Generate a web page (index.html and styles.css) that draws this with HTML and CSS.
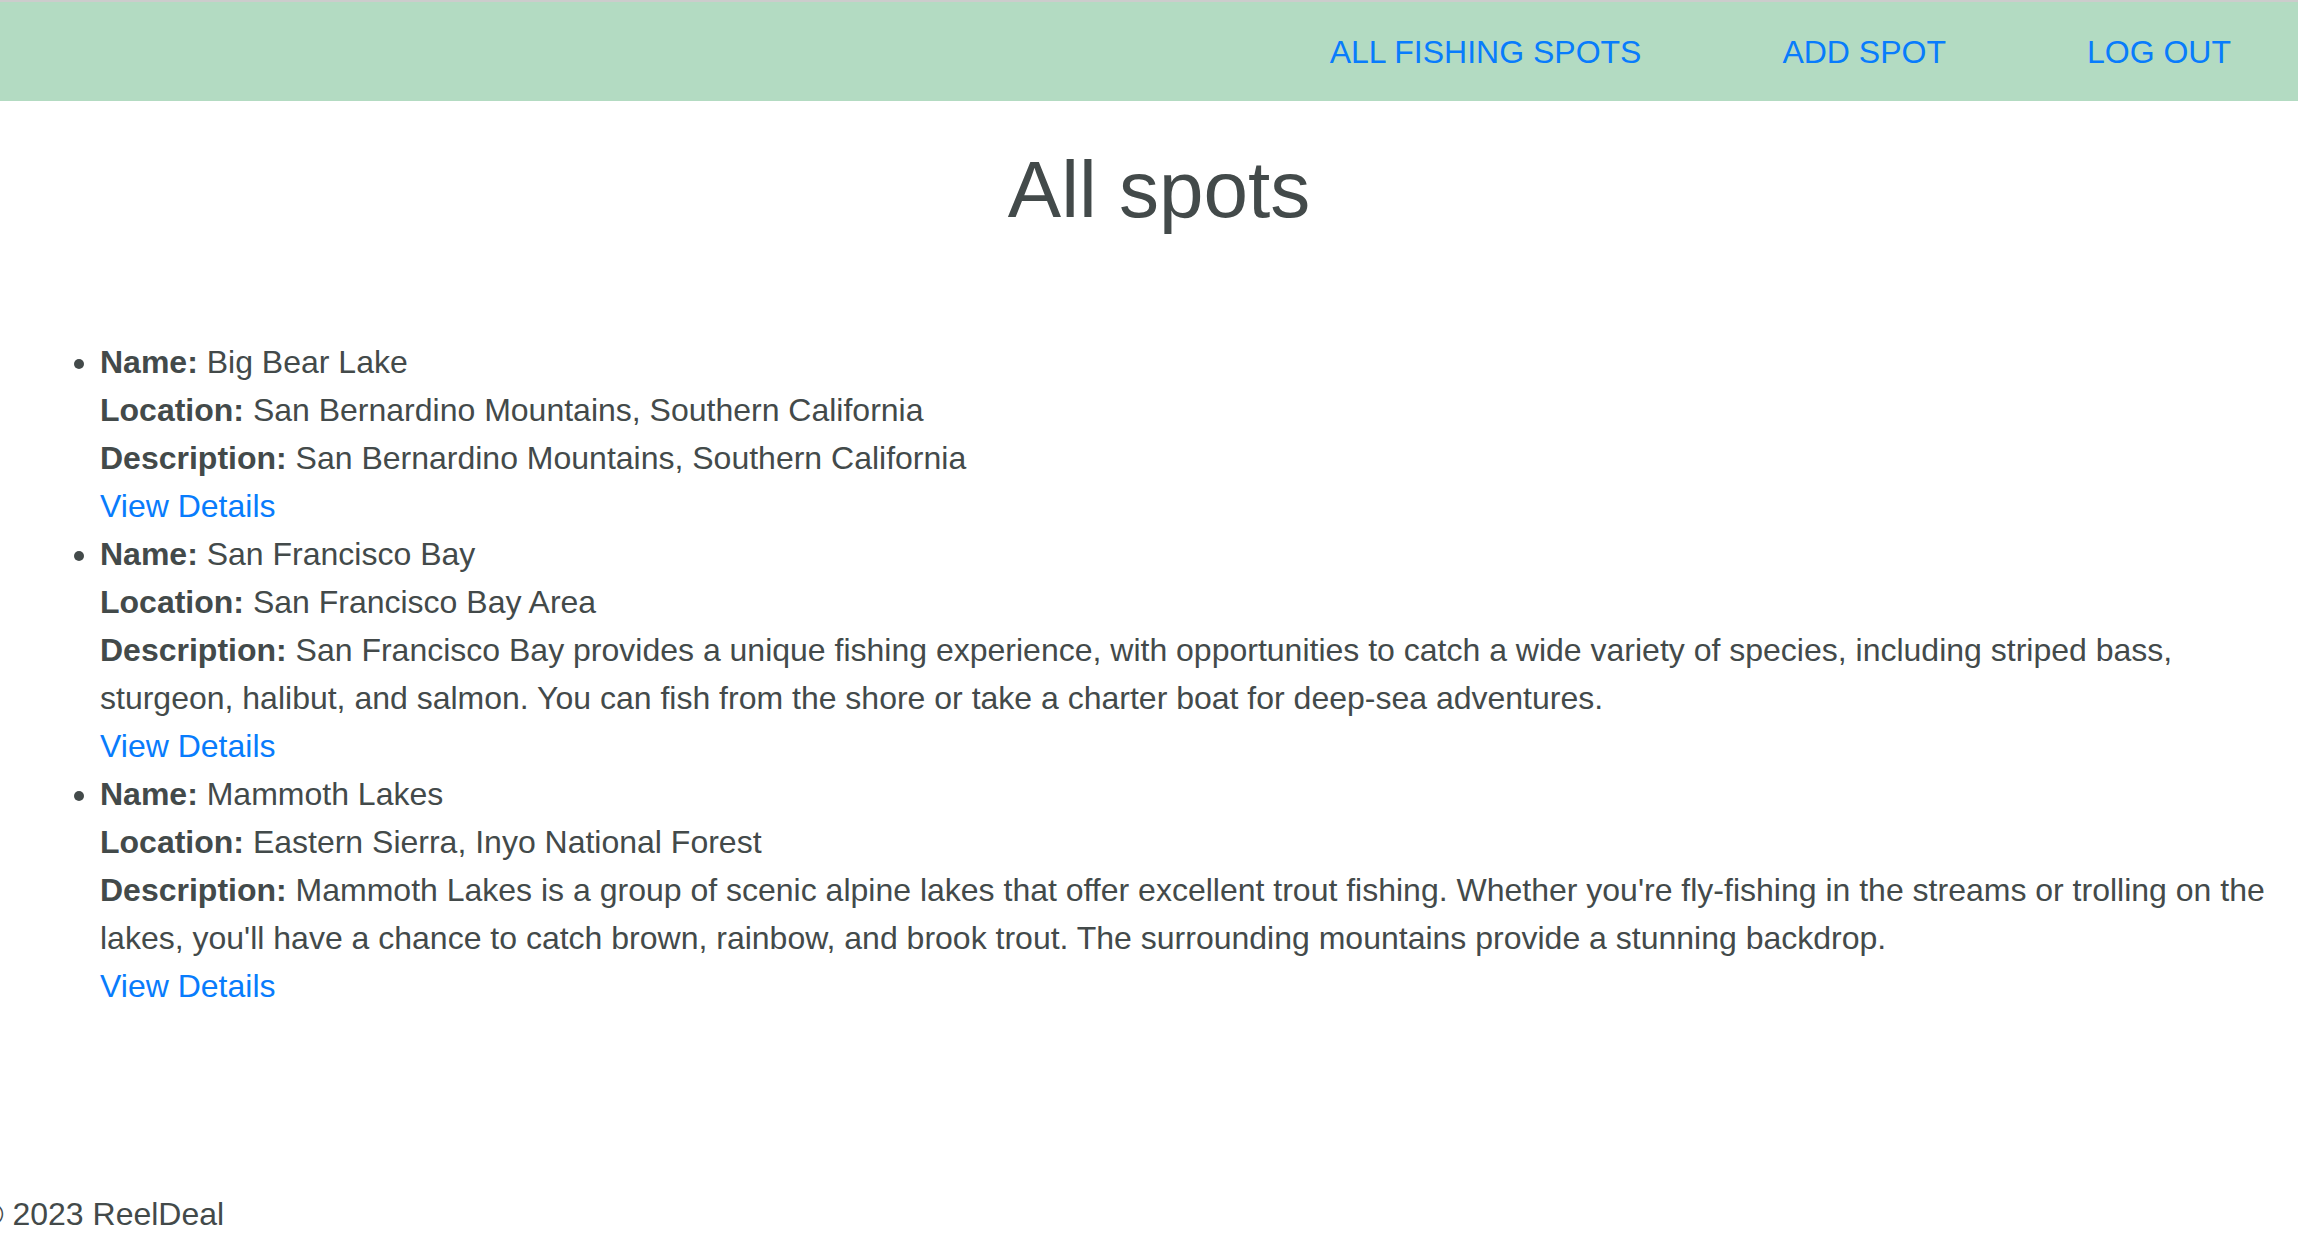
FILE: index.html
```html
<!DOCTYPE html>
<html lang="en">
<head>
<meta charset="utf-8">
<title>All spots</title>
<link rel="stylesheet" href="styles.css">
</head>
<body>
<div class="page">
  <nav class="navbar">
    <a class="nav-link" href="#">ALL FISHING SPOTS</a>
    <a class="nav-link" href="#">ADD SPOT</a>
    <a class="nav-link" href="#">LOG OUT</a>
  </nav>
  <main class="content">
    <h1 class="title">All spots</h1>
    <ul class="spots">
      <li class="spot">
        <div><b>Name:</b> Big Bear Lake</div>
        <div><b>Location:</b> San Bernardino Mountains, Southern California</div>
        <div><b>Description:</b> San Bernardino Mountains, Southern California</div>
        <a class="details" href="#">View Details</a>
      </li>
      <li class="spot">
        <div><b>Name:</b> San Francisco Bay</div>
        <div><b>Location:</b> San Francisco Bay Area</div>
        <div><b>Description:</b> San Francisco Bay provides a unique fishing experience, with opportunities to catch a wide variety of species, including striped bass, sturgeon, halibut, and salmon. You can fish from the shore or take a charter boat for deep-sea adventures.</div>
        <a class="details" href="#">View Details</a>
      </li>
      <li class="spot">
        <div><b>Name:</b> Mammoth Lakes</div>
        <div><b>Location:</b> Eastern Sierra, Inyo National Forest</div>
        <div><b>Description:</b> Mammoth Lakes is a group of scenic alpine lakes that offer excellent trout fishing. Whether you're fly-fishing in the streams or trolling on the lakes, you'll have a chance to catch brown, rainbow, and brook trout. The surrounding mountains provide a stunning backdrop.</div>
        <a class="details" href="#">View Details</a>
      </li>
    </ul>
  </main>
  <footer class="footer">© 2023 ReelDeal</footer>
</div>
</body>
</html>
```

FILE: styles.css
```css
html, body {
  margin: 0;
  padding: 0;
  background: #ffffff;
}

body {
  font-family: "Liberation Sans", Arial, Helvetica, sans-serif;
  font-size: 32px;
  line-height: 48px;
  color: #434a4a;
  overflow: hidden;
}

.page {
  min-height: 100vh;
  display: flex;
  flex-direction: column;
}

.navbar {
  box-sizing: border-box;
  height: 101px;
  border-top: 2px solid #cccccc;
  background: #b3dbc2;
  display: flex;
  justify-content: flex-end;
  align-items: center;
  gap: 141px;
  padding-right: 67px;
}

.nav-link {
  color: #087cfc;
  text-decoration: none;
  font-size: 32px;
  line-height: 48px;
}

.content {
  padding-left: 20px;
}

.title {
  margin: 41px 0 0;
  text-align: center;
  font-size: 80px;
  line-height: 96px;
  font-weight: normal;
  color: #434a4a;
}

.spots {
  margin: 100px 0 0;
  padding-left: 80px;
  list-style: disc outside;
}

.spot b {
  font-weight: bold;
}

.details {
  color: #087cfc;
  text-decoration: none;
}

.footer {
  margin-top: auto;
  margin-left: -20px;
  white-space: nowrap;
}
```
